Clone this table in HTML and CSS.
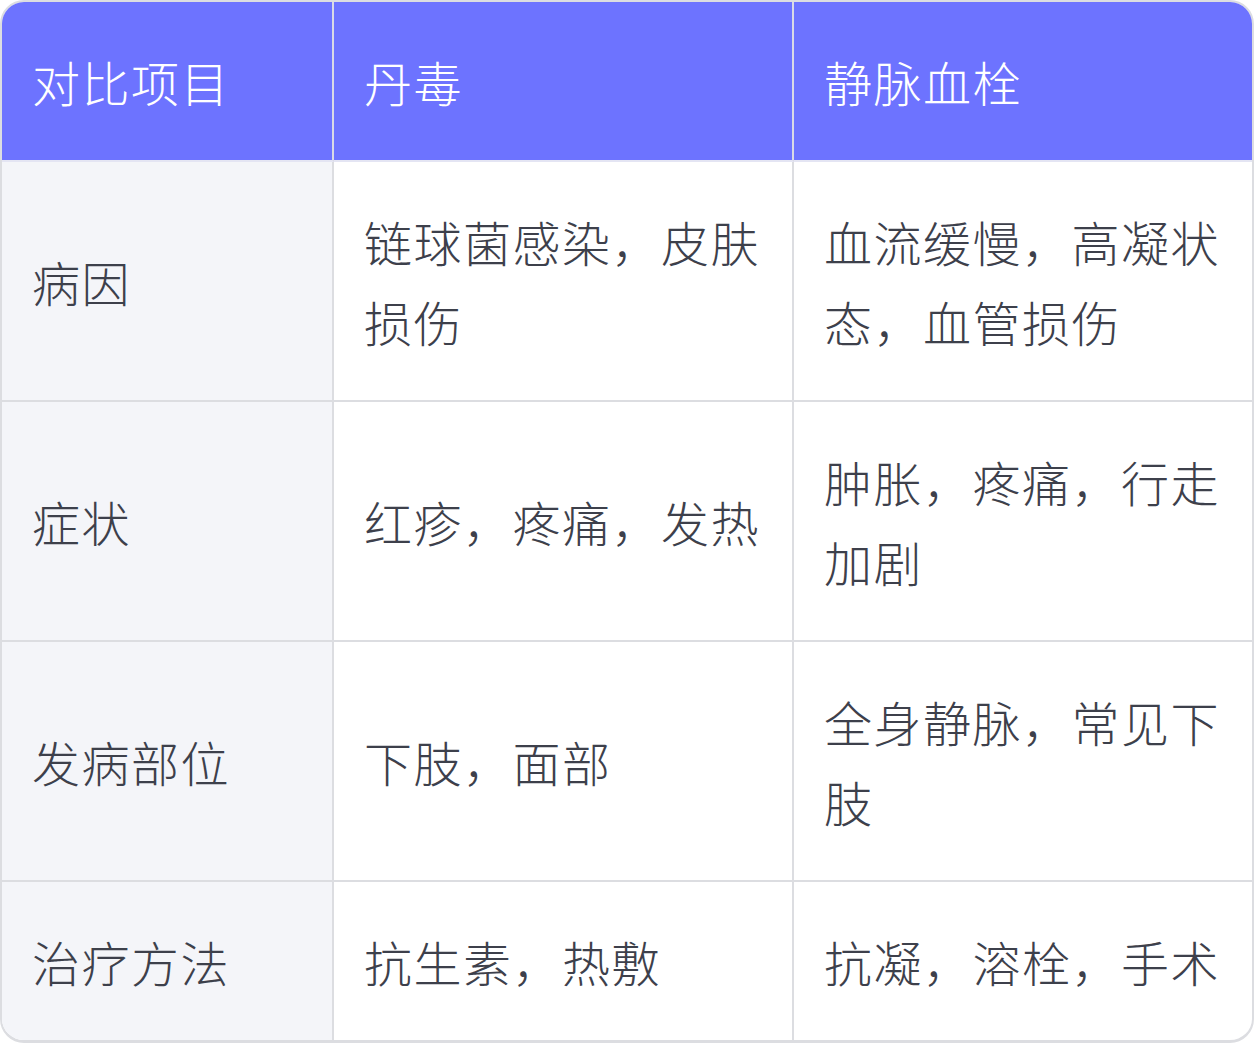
FILE: index.html
```html
<!DOCTYPE html>
<html lang="zh">
<head>
<meta charset="utf-8">
<link rel="stylesheet" href="styles.css">
</head>
<body>
<div class="wrap">
<table class="cmp">
<colgroup><col class="c1"><col class="c2"><col class="c3"></colgroup>
<thead>
<tr><th>对比项目</th><th>丹毒</th><th>静脉血栓</th></tr>
</thead>
<tbody>
<tr><td class="key">病因</td><td>链球菌感染，皮肤损伤</td><td>血流缓慢，高凝状态，血管损伤</td></tr>
<tr><td class="key">症状</td><td>红疹，疼痛，发热</td><td>肿胀，疼痛，行走加剧</td></tr>
<tr><td class="key">发病部位</td><td>下肢，面部</td><td>全身静脉，常见下肢</td></tr>
<tr><td class="key">治疗方法</td><td>抗生素，热敷</td><td>抗凝，溶栓，手术</td></tr>
</tbody>
</table>
</div>
</body>
</html>
```
FILE: styles.css
```css
html, body {
  margin: 0;
  padding: 0;
  background: #ffffff;
}
.wrap {
  width: 1254px;
  height: 1043px;
  box-sizing: border-box;
  border: 2px solid #dcdde1;
  border-bottom-width: 3px;
  border-radius: 24px;
  overflow: hidden;
  background: #ffffff;
}
.cmp {
  width: 1250px;
  border-collapse: separate;
  border-spacing: 0;
  table-layout: fixed;
  font-family: "Noto Sans CJK SC", "Noto Sans", sans-serif;
  font-size: 48px;
  font-weight: 300;
  letter-spacing: 1.5px;
  line-height: 80px;
  color: #3d404b;
}
.c1 { width: 332px; }
.c2 { width: 460px; }
.c3 { width: 458px; }
.cmp th, .cmp td {
  padding: 39px 18px 39px 30px;
  text-align: left;
  vertical-align: middle;
  font-weight: 300;
  border-right: 2px solid #dcdde1;
  border-bottom: 2px solid #dcdde1;
}
.cmp th:last-child, .cmp td:last-child {
  border-right: none;
}
.cmp tbody tr:last-child td {
  border-bottom: none;
}
.cmp th {
  background: #6d73ff;
  color: #ffffff;
  border-bottom-color: #e4e5f3;
  border-right-color: #d9dae6;
}
.cmp td.key {
  background: #f4f5f9;
}
```
